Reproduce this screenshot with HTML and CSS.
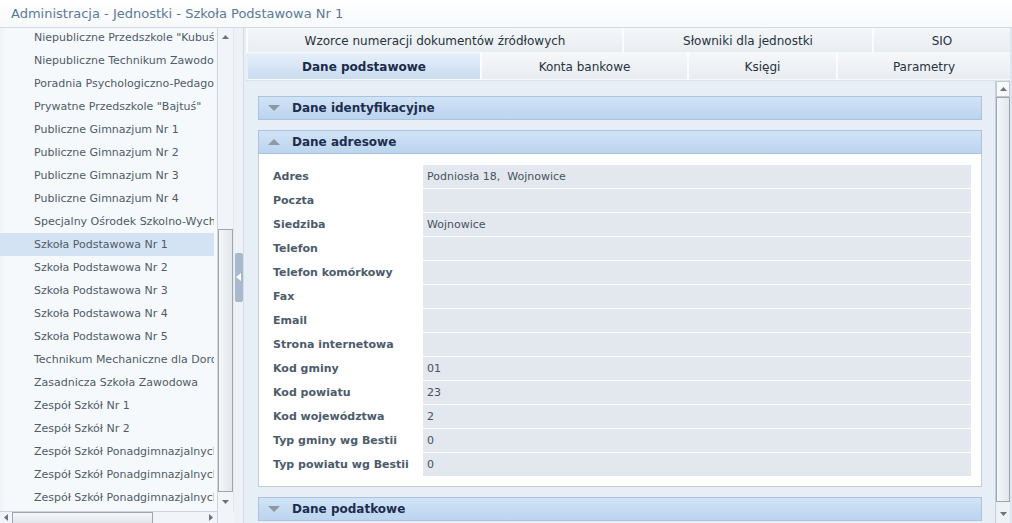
FILE: index.html
```html
<!DOCTYPE html>
<html lang="pl">
<head>
<meta charset="utf-8">
<title>Administracja - Jednostki</title>
<link rel="stylesheet" href="styles.css">
</head>
<body>
<div class="title">Administracja - Jednostki - Szkoła Podstawowa Nr 1</div>
<div class="main">
  <div class="left">
    <div class="list-wrap">
      <ul class="list">
        <li>Niepubliczne Przedszkole "Kubuś"</li>
        <li>Niepubliczne Technikum Zawodowe</li>
        <li>Poradnia Psychologiczno-Pedagogiczna</li>
        <li>Prywatne Przedszkole "Bajtuś"</li>
        <li>Publiczne Gimnazjum Nr 1</li>
        <li>Publiczne Gimnazjum Nr 2</li>
        <li>Publiczne Gimnazjum Nr 3</li>
        <li>Publiczne Gimnazjum Nr 4</li>
        <li>Specjalny Ośrodek Szkolno-Wychowawczy</li>
        <li class="sel">Szkoła Podstawowa Nr 1</li>
        <li>Szkoła Podstawowa Nr 2</li>
        <li>Szkoła Podstawowa Nr 3</li>
        <li>Szkoła Podstawowa Nr 4</li>
        <li>Szkoła Podstawowa Nr 5</li>
        <li>Technikum Mechaniczne dla Dorosłych</li>
        <li>Zasadnicza Szkoła Zawodowa</li>
        <li>Zespół Szkół Nr 1</li>
        <li>Zespół Szkół Nr 2</li>
        <li>Zespół Szkół Ponadgimnazjalnych Nr 1</li>
        <li>Zespół Szkół Ponadgimnazjalnych Nr 2</li>
        <li>Zespół Szkół Ponadgimnazjalnych Nr 3</li>
      </ul>
    </div>
    <div class="vscroll lv">
      <div class="arr"><svg width="7" height="4" viewBox="0 0 7 4"><path d="M0 4 L3.5 0 L7 4Z" fill="#6b747e"/></svg></div>
      <div class="track"><div class="thumb lthumb"></div></div>
      <div class="arr"><svg width="7" height="4" viewBox="0 0 7 4"><path d="M0 0 L3.5 4 L7 0Z" fill="#6b747e"/></svg></div>
    </div>
    <div class="hscroll">
      <div class="harr"><svg width="4" height="7" viewBox="0 0 4 7"><path d="M4 0 L0 3.5 L4 7Z" fill="#6b747e"/></svg></div>
      <div class="htrack"><div class="hthumb"></div></div>
      <div class="harr"><svg width="4" height="7" viewBox="0 0 4 7"><path d="M0 0 L4 3.5 L0 7Z" fill="#6b747e"/></svg></div>
    </div>
    <div class="corner"></div>
  </div>
  <div class="splitter">
    <div class="handle"><svg width="5" height="8" viewBox="0 0 5 8"><path d="M5 0 L0 4 L5 8Z" fill="#ffffff"/></svg></div>
  </div>
  <div class="right">
    <div class="tabrow r1">
      <div class="tab w1">Wzorce numeracji dokumentów źródłowych</div>
      <div class="tab w2">Słowniki dla jednostki</div>
      <div class="tab w3">SIO</div>
    </div>
    <div class="tabrow r2">
      <div class="tab active w4">Dane podstawowe</div>
      <div class="tab w5">Konta bankowe</div>
      <div class="tab w6">Księgi</div>
      <div class="tab w7">Parametry</div>
    </div>
    <div class="content">
      <div class="sections">
        <div class="shead">
          <svg width="12" height="6" viewBox="0 0 12 6"><path d="M0 0 L12 0 L6 6Z" fill="#8d97a2"/></svg>
          <span>Dane identyfikacyjne</span>
        </div>
        <div class="shead">
          <svg width="12" height="6" viewBox="0 0 12 6"><path d="M0 6 L12 6 L6 0Z" fill="#8d97a2"/></svg>
          <span>Dane adresowe</span>
        </div>
        <div class="sbody">
          <div class="row"><div class="lbl">Adres</div><div class="val">Podniosła 18,&nbsp; Wojnowice</div></div>
          <div class="row"><div class="lbl">Poczta</div><div class="val"></div></div>
          <div class="row"><div class="lbl">Siedziba</div><div class="val">Wojnowice</div></div>
          <div class="row"><div class="lbl">Telefon</div><div class="val"></div></div>
          <div class="row"><div class="lbl">Telefon komórkowy</div><div class="val"></div></div>
          <div class="row"><div class="lbl">Fax</div><div class="val"></div></div>
          <div class="row"><div class="lbl">Email</div><div class="val"></div></div>
          <div class="row"><div class="lbl">Strona internetowa</div><div class="val"></div></div>
          <div class="row"><div class="lbl">Kod gminy</div><div class="val">01</div></div>
          <div class="row"><div class="lbl">Kod powiatu</div><div class="val">23</div></div>
          <div class="row"><div class="lbl">Kod województwa</div><div class="val">2</div></div>
          <div class="row"><div class="lbl">Typ gminy wg Bestii</div><div class="val">0</div></div>
          <div class="row"><div class="lbl">Typ powiatu wg Bestii</div><div class="val">0</div></div>
        </div>
        <div class="shead">
          <svg width="12" height="6" viewBox="0 0 12 6"><path d="M0 0 L12 0 L6 6Z" fill="#8d97a2"/></svg>
          <span>Dane podatkowe</span>
        </div>
      </div>
      <div class="vscroll rv">
        <div class="arr box"><svg width="7" height="4" viewBox="0 0 7 4"><path d="M0 4 L3.5 0 L7 4Z" fill="#6b747e"/></svg></div>
        <div class="track"><div class="thumb rthumb"></div></div>
        <div class="arr"><svg width="7" height="4" viewBox="0 0 7 4"><path d="M0 0 L3.5 4 L7 0Z" fill="#6b747e"/></svg></div>
      </div>
    </div>
  </div>
</div>
</body>
</html>
```

FILE: styles.css
```css
* { box-sizing: border-box; }
html, body {
  margin: 0;
  padding: 0;
  width: 1012px;
  height: 523px;
  overflow: hidden;
  font-family: "DejaVu Sans", Verdana, sans-serif;
  font-size: 11px;
  background: #ffffff;
}
.title {
  height: 28px;
  line-height: 27px;
  padding-left: 11px;
  font-size: 13px;
  color: #5b7998;
  background: linear-gradient(#ffffff, #f7f9fb);
  border-bottom: 1px solid #d3dbe4;
}
.main {
  display: flex;
  height: 495px;
}
/* left panel */
.left {
  width: 234px;
  display: grid;
  grid-template-columns: 217px 17px;
  grid-template-rows: 483px 12px;
  background: #f5f8fc;
}
.list-wrap {
  overflow: hidden;
  background: linear-gradient(90deg, #eef3f9 0, #f6f9fc 6px, #f6f9fc 100%);
}
.list {
  list-style: none;
  margin: -2px 0 0 0;
  padding: 0;
}
.list li {
  width: 214px;
  height: 23px;
  line-height: 23px;
  padding-left: 34px;
  white-space: nowrap;
  overflow: hidden;
  color: #4f5b68;
}
.list li.sel {
  background: #d4e3f4;
}
.vscroll {
  display: flex;
  flex-direction: column;
  background: #f1f4f8;
}
.lv {
  border-left: 1px solid #cdd4dc;
  border-right: 1px solid #e3e8ee;
}
.arr {
  height: 18px;
  display: flex;
  align-items: center;
  justify-content: center;
  flex: none;
}
.track {
  flex: 1;
  display: flex;
  flex-direction: column;
  justify-content: flex-end;
}
.thumb {
  border: 1px solid #9ea7b1;
  background: linear-gradient(90deg, #f4f6f8, #e3e7ec);
}
.lthumb {
  height: 263px;
  margin-bottom: 1px;
}
.hscroll {
  display: flex;
  border-top: 1px solid #cdd4dc;
  background: #f1f4f8;
  height: 12px;
}
.harr {
  width: 12px;
  display: flex;
  align-items: center;
  justify-content: center;
}
.htrack {
  flex: 1;
}
.hthumb {
  width: 141px;
  height: 11px;
  border: 1px solid #9ea7b1;
  border-bottom: none;
  background: linear-gradient(#f4f6f8, #e3e7ec);
}
.corner {
  background: #f1f4f8;
  border-left: 1px solid #cdd4dc;
}
/* splitter */
.splitter {
  width: 10px;
  background: #eef2f7;
  border-right: 1px solid #d6dde6;
  display: flex;
  align-items: center;
  justify-content: center;
  padding-top: 3px;
}
.handle {
  width: 8px;
  height: 49px;
  background: #a7b9cc;
  border-radius: 2px;
  display: flex;
  align-items: center;
  justify-content: center;
}
/* right panel */
.right {
  flex: 1;
  display: flex;
  flex-direction: column;
  background: #e8eef5;
  border-right: 2px solid #dfe6ee;
  padding-left: 2px;
}
.tabrow {
  display: flex;
  flex: none;
}
.r1 { height: 25px; }
.r2 { height: 27px; }
.tab {
  display: flex;
  align-items: center;
  justify-content: center;
  font-size: 12px;
  color: #28323d;
  white-space: nowrap;
  padding-top: 2px;
  background: linear-gradient(#f5f7f9, #e8edf2);
  border-left: 2px solid #fbfcfd;
  border-bottom: 1px solid #f6f8fa;
}
.tab.active {
  font-weight: bold;
  color: #1b2b4a;
  background: linear-gradient(#e6eff9, #c9dcf1);
  border-left-color: #e8eef5;
}
.w1 { width: 376px; }
.w2 { width: 250px; }
.w3 { flex: 1; }
.w4 { width: 234px; }
.w5 { width: 207px; }
.w6 { width: 149px; }
.w7 { flex: 1; }
.content {
  flex: 1;
  display: flex;
  min-height: 0;
  border-top: 1px solid #dbe3ec;
}
.sections {
  flex: 1;
  padding: 15px 13px 0 12px;
  overflow: hidden;
}
.shead {
  height: 24px;
  display: flex;
  align-items: center;
  padding-left: 9px;
  gap: 12px;
  border: 1px solid #aac3df;
  background: linear-gradient(#d1e3f6, #bcd4ef);
  font-weight: bold;
  font-size: 12px;
  color: #1d2d4d;
  margin-bottom: 10px;
}
.shead span {
  padding-bottom: 1px;
}
.sbody {
  margin-top: -10px;
  margin-bottom: 10px;
  background: #ffffff;
  border: 1px solid #c4ccd5;
  border-top: none;
  padding: 11px 10px 9px 14px;
}
.row {
  display: grid;
  grid-template-columns: 150px 1fr;
  height: 24px;
}
.lbl {
  line-height: 23px;
  font-weight: bold;
  color: #4c5b6c;
  white-space: nowrap;
}
.val {
  height: 23px;
  line-height: 23px;
  padding-left: 4px;
  background: #e3e8ef;
  color: #47525e;
}
.rv {
  width: 15px;
  flex: none;
  border-left: 1px solid #c6ced7;
  background: #eef2f6;
}
.rv .box {
  height: 16px;
  border: 1px solid #c0c8d1;
  background: #f7f9fb;
}
.rthumb {
  height: 405px;
  margin-bottom: 2px;
}
.rv .arr:last-child {
  height: 19px;
}
```
